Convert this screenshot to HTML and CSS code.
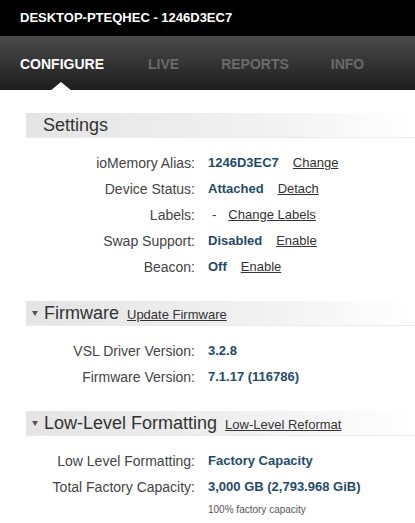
FILE: index.html
```html
<!DOCTYPE html>
<html lang="en">

<head>
    <meta charset="UTF-8" />
    <meta name="viewport" content="width=device-width, initial-scale=1.0" />
    <title>DESKTOP-PTEQHEC - 1246D3EC7</title>
    <link rel="stylesheet" href="styles.css">
</head>

<body>
    <div class="title-bar">DESKTOP-PTEQHEC - 1246D3EC7</div>

    <nav class="tabs">
        <a class="tab active" href="#">CONFIGURE</a>
        <a class="tab" href="#">LIVE</a>
        <a class="tab" href="#">REPORTS</a>
        <a class="tab" href="#">INFO</a>
    </nav>

    <div class="content">
        <div class="section">
            <div class="section-header">
                <h2 class="plain-title">Settings</h2>
            </div>
            <div class="rows">
                <div class="label">ioMemory Alias:</div>
                <div class="value"><b>1246D3EC7</b><a href="#">Change</a></div>

                <div class="label">Device Status:</div>
                <div class="value"><b>Attached</b><a href="#">Detach</a></div>

                <div class="label">Labels:</div>
                <div class="value"><span class="plain">-</span><a href="#">Change Labels</a></div>

                <div class="label">Swap Support:</div>
                <div class="value"><b>Disabled</b><a href="#">Enable</a></div>

                <div class="label">Beacon:</div>
                <div class="value"><b>Off</b><a href="#">Enable</a></div>
            </div>
        </div>

        <div class="section">
            <div class="section-header">
                <span class="caret"></span>
                <h2>Firmware</h2>
                <a href="#">Update Firmware</a>
            </div>
            <div class="rows">
                <div class="label">VSL Driver Version:</div>
                <div class="value"><b>3.2.8</b></div>

                <div class="label">Firmware Version:</div>
                <div class="value"><b>7.1.17 (116786)</b></div>
            </div>
        </div>

        <div class="section">
            <div class="section-header">
                <span class="caret"></span>
                <h2>Low-Level Formatting</h2>
                <a href="#">Low-Level Reformat</a>
            </div>
            <div class="rows">
                <div class="label">Low Level Formatting:</div>
                <div class="value"><b>Factory Capacity</b></div>

                <div class="label">Total Factory Capacity:</div>
                <div class="value"><b>3,000 GB (2,793.968 GiB)</b></div>

                <div class="label"></div>
                <div class="value note">100% factory capacity</div>
            </div>
        </div>
    </div>
</body>

</html>
```

FILE: styles.css
```css
html,
body {
    overflow: hidden;
}

body {
    margin: 0;
    font-family: "Liberation Sans", Arial, sans-serif;
    background-color: white;
    color: #333;
}

a {
    color: #333;
}

.title-bar {
    height: 36px;
    line-height: 36px;
    padding-left: 20px;
    background-color: #000;
    color: white;
    font-size: 13px;
    font-weight: bold;
}

.tabs {
    display: flex;
    height: 54px;
    align-items: center;
    padding-left: 20px;
    background: linear-gradient(#4b4b4b, #1d1d1d);
}

.tab {
    position: relative;
    color: #6a6a6a;
    font-size: 14px;
    font-weight: bold;
    text-decoration: none;
    margin-right: 42px;
    padding-top: 2px;
}

.tab.active {
    color: white;
    margin-right: 44px;
}

.tab.active::after {
    content: "";
    position: absolute;
    left: 30px;
    bottom: -19px;
    border-left: 11px solid transparent;
    border-right: 11px solid transparent;
    border-bottom: 9px solid white;
}

.content {
    padding-top: 23px;
}

.section {
    margin-bottom: 21px;
}

.section-header {
    display: flex;
    align-items: center;
    height: 24px;
    margin-left: 26px;
    padding-left: 5px;
    background: linear-gradient(to right, #e4e4e4, #f1f1f1 60%, #fff);
    border-bottom: 1px solid #ebebeb;
}

.section-header h2 {
    margin: 0 8px 0 0;
    font-size: 18px;
    font-weight: normal;
    color: #333;
}

.section-header h2.plain-title {
    margin-left: 12px;
}

.section-header a {
    font-size: 13px;
    margin-top: 3px;
}

.caret {
    width: 0;
    height: 0;
    margin: 1px 6px 0 1px;
    border-left: 3px solid transparent;
    border-right: 3px solid transparent;
    border-top: 5px solid #555;
}

.rows {
    display: grid;
    grid-template-columns: 195px auto;
    column-gap: 13px;
    grid-auto-rows: 26px;
    padding-top: 12px;
    font-size: 13px;
    line-height: 26px;
}

.label {
    text-align: right;
    font-size: 14px;
    color: #444;
}

.value b {
    color: #1f4b6b;
    margin-right: 14px;
}

.value .plain {
    margin: 0 12px 0 4px;
}

.value.note {
    font-size: 10px;
    color: #555;
    line-height: 20px;
}
```
